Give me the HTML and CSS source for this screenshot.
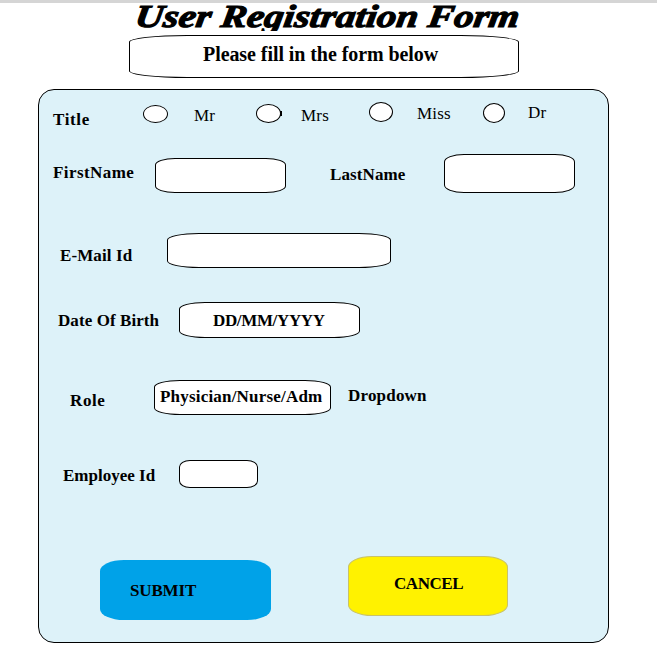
FILE: index.html
```html
<!DOCTYPE html>
<html lang="en">
<head>
<meta charset="utf-8">
<title>User Registration Form</title>
<link rel="stylesheet" href="styles.css">
</head>
<body>
<div class="topbar"></div>
<header class="header">
  <div class="title-clip"><h1 class="title">User Registration Form</h1></div>
  <div class="intro"><span>Please fill in the form below</span></div>
</header>
<main class="panel">
  <div class="row row-title">
    <span class="label title-label">Title</span>
    <i class="radio radio-mr"></i><span class="option opt-mr">Mr</span>
    <i class="radio radio-mrs"></i><span class="option opt-mrs">Mrs</span>
    <i class="radio radio-miss"></i><span class="option opt-miss">Miss</span>
    <i class="radio radio-dr"></i><span class="option opt-dr">Dr</span>
  </div>
  <div class="row row-name">
    <span class="label first-label">FirstName</span>
    <div class="field first"></div>
    <span class="label last-label">LastName</span>
    <div class="field last"></div>
  </div>
  <div class="row row-email">
    <span class="label email-label">E-Mail Id</span>
    <div class="field email"></div>
  </div>
  <div class="row row-dob">
    <span class="label dob-label">Date Of Birth</span>
    <div class="field dob"><span>DD/MM/YYYY</span></div>
  </div>
  <div class="row row-role">
    <span class="label role-label">Role</span>
    <div class="field role"><span>Physician/Nurse/Adm</span></div>
    <span class="label drop-label">Dropdown</span>
  </div>
  <div class="row row-emp">
    <span class="label emp-label">Employee Id</span>
    <div class="field emp"></div>
  </div>
  <div class="row row-actions">
    <div class="button submit"><span>SUBMIT</span></div>
    <div class="button cancel"><span>CANCEL</span></div>
  </div>
</main>
</body>
</html>
```
FILE: styles.css
```css
* { box-sizing: border-box; }

body {
  margin: 0;
  width: 657px;
  height: 652px;
  overflow: hidden;
  background: #fff;
  color: #000;
  font: bold 17px/18px "Liberation Serif", "Times New Roman", serif;
  white-space: nowrap;
}

.topbar { height: 3px; background: #d5d5d5; }

.header { height: 86px; }

.title-clip {
  height: 28px;
  overflow: hidden;
  padding: 0 0 0 134px;
}

.title {
  margin: 0;
  width: max-content;
  font: italic bold 32px/38px "Liberation Serif", "Times New Roman", serif;
  -webkit-text-stroke: 1.1px #000;
  transform-origin: 0 30px;
  transform: translateY(-6px) scaleX(1.22) skewX(-7deg);
}

.intro {
  width: 390px;
  height: 43px;
  margin: 4px 0 0 129px;
  padding: 7px 0 0 73px;
  border: 1px solid #000;
  border-radius: 58px / 7px;
  font-size: 20px;
  line-height: 22px;
  letter-spacing: -0.07px;
}

.panel {
  width: 571px;
  height: 554px;
  margin-left: 38px;
  border: 1px solid #000;
  border-radius: 16px;
  background: #ddf2f9;
}

.row { display: flex; align-items: flex-start; }

.row-title {
  display: grid;
  grid-template-columns: 90px 51px 62px 45px 68px 48px 66px 45px auto;
  height: 60px;
  padding-left: 14px;
}
.option { font-weight: normal; letter-spacing: 0.2px; }
.title-label { margin-top: 21px; letter-spacing: 0.65px; }
.opt-mr, .opt-mrs { margin-top: 17px; }
.opt-miss { margin-top: 15px; }
.opt-dr { margin-top: 14px; }
.radio {
  display: block;
  width: 25px;
  height: 19px;
  border: 1px solid #000;
  border-radius: 50%;
  background: #fff;
}
.radio-mr { margin-top: 15px; height: 18px; }
.radio-mrs { position: relative; margin-top: 14px; }
.radio-mrs::after {
  content: "";
  position: absolute;
  right: -2px;
  top: 6px;
  width: 2px;
  height: 5px;
  background: #000;
}
.radio-miss { width: 24px; height: 20px; margin-top: 12px; }
.radio-dr { width: 22px; height: 20px; margin-top: 13px; }

.field { border: 1px solid #000; background: #fff; flex: none; }
.label { flex: none; }

.row-name { height: 80px; }
.first-label { width: 102px; margin: 14px 0 0 14px; letter-spacing: 0.42px; }
.first { width: 131px; height: 35px; margin-top: 8px; border-radius: 20px / 7px; }
.last-label { width: 114px; margin: 16px 0 0 44px; letter-spacing: 0.1px; }
.last { width: 131px; height: 39px; margin-top: 4px; border-radius: 20px / 8px; }

.row-email { height: 70px; }
.email-label { width: 107px; margin: 17px 0 0 21px; letter-spacing: 0.1px; }
.email { width: 224px; height: 35px; margin-top: 3px; border-radius: 32px / 7px; }

.row-dob { height: 70px; }
.dob-label { width: 121px; margin: 12px 0 0 19px; letter-spacing: 0.08px; }
.dob {
  width: 181px;
  height: 36px;
  margin-top: 2px;
  padding: 9px 0 0 33px;
  border-radius: 26px / 7px;
  letter-spacing: -0.35px;
}

.row-role { height: 80px; }
.role-label { width: 84px; margin: 22px 0 0 31px; letter-spacing: 0.6px; }
.role {
  width: 177px;
  height: 35px;
  margin-top: 10px;
  padding: 7px 0 0 5px;
  border-radius: 26px / 7px;
  letter-spacing: 0.2px;
}
.drop-label { margin: 17px 0 0 17px; letter-spacing: 0.2px; }

.row-emp { height: 90px; }
.emp-label { width: 116px; margin: 17px 0 0 24px; letter-spacing: 0; }
.emp { width: 79px; height: 28px; margin-top: 10px; border-radius: 11px / 7px; }

.row-actions { height: 100px; padding-left: 61px; }
.submit {
  width: 171px;
  height: 60px;
  margin-top: 20px;
  padding: 22px 0 0 30px;
  border-radius: 24px / 11px;
  background: #00a2e8;
  letter-spacing: -0.15px;
}
.cancel {
  width: 160px;
  height: 60px;
  margin: 16px 0 0 77px;
  padding: 18px 0 0 45px;
  border: 1px solid #c8c26a;
  border-radius: 24px / 11px;
  background: #fff200;
  letter-spacing: -0.45px;
}
```
